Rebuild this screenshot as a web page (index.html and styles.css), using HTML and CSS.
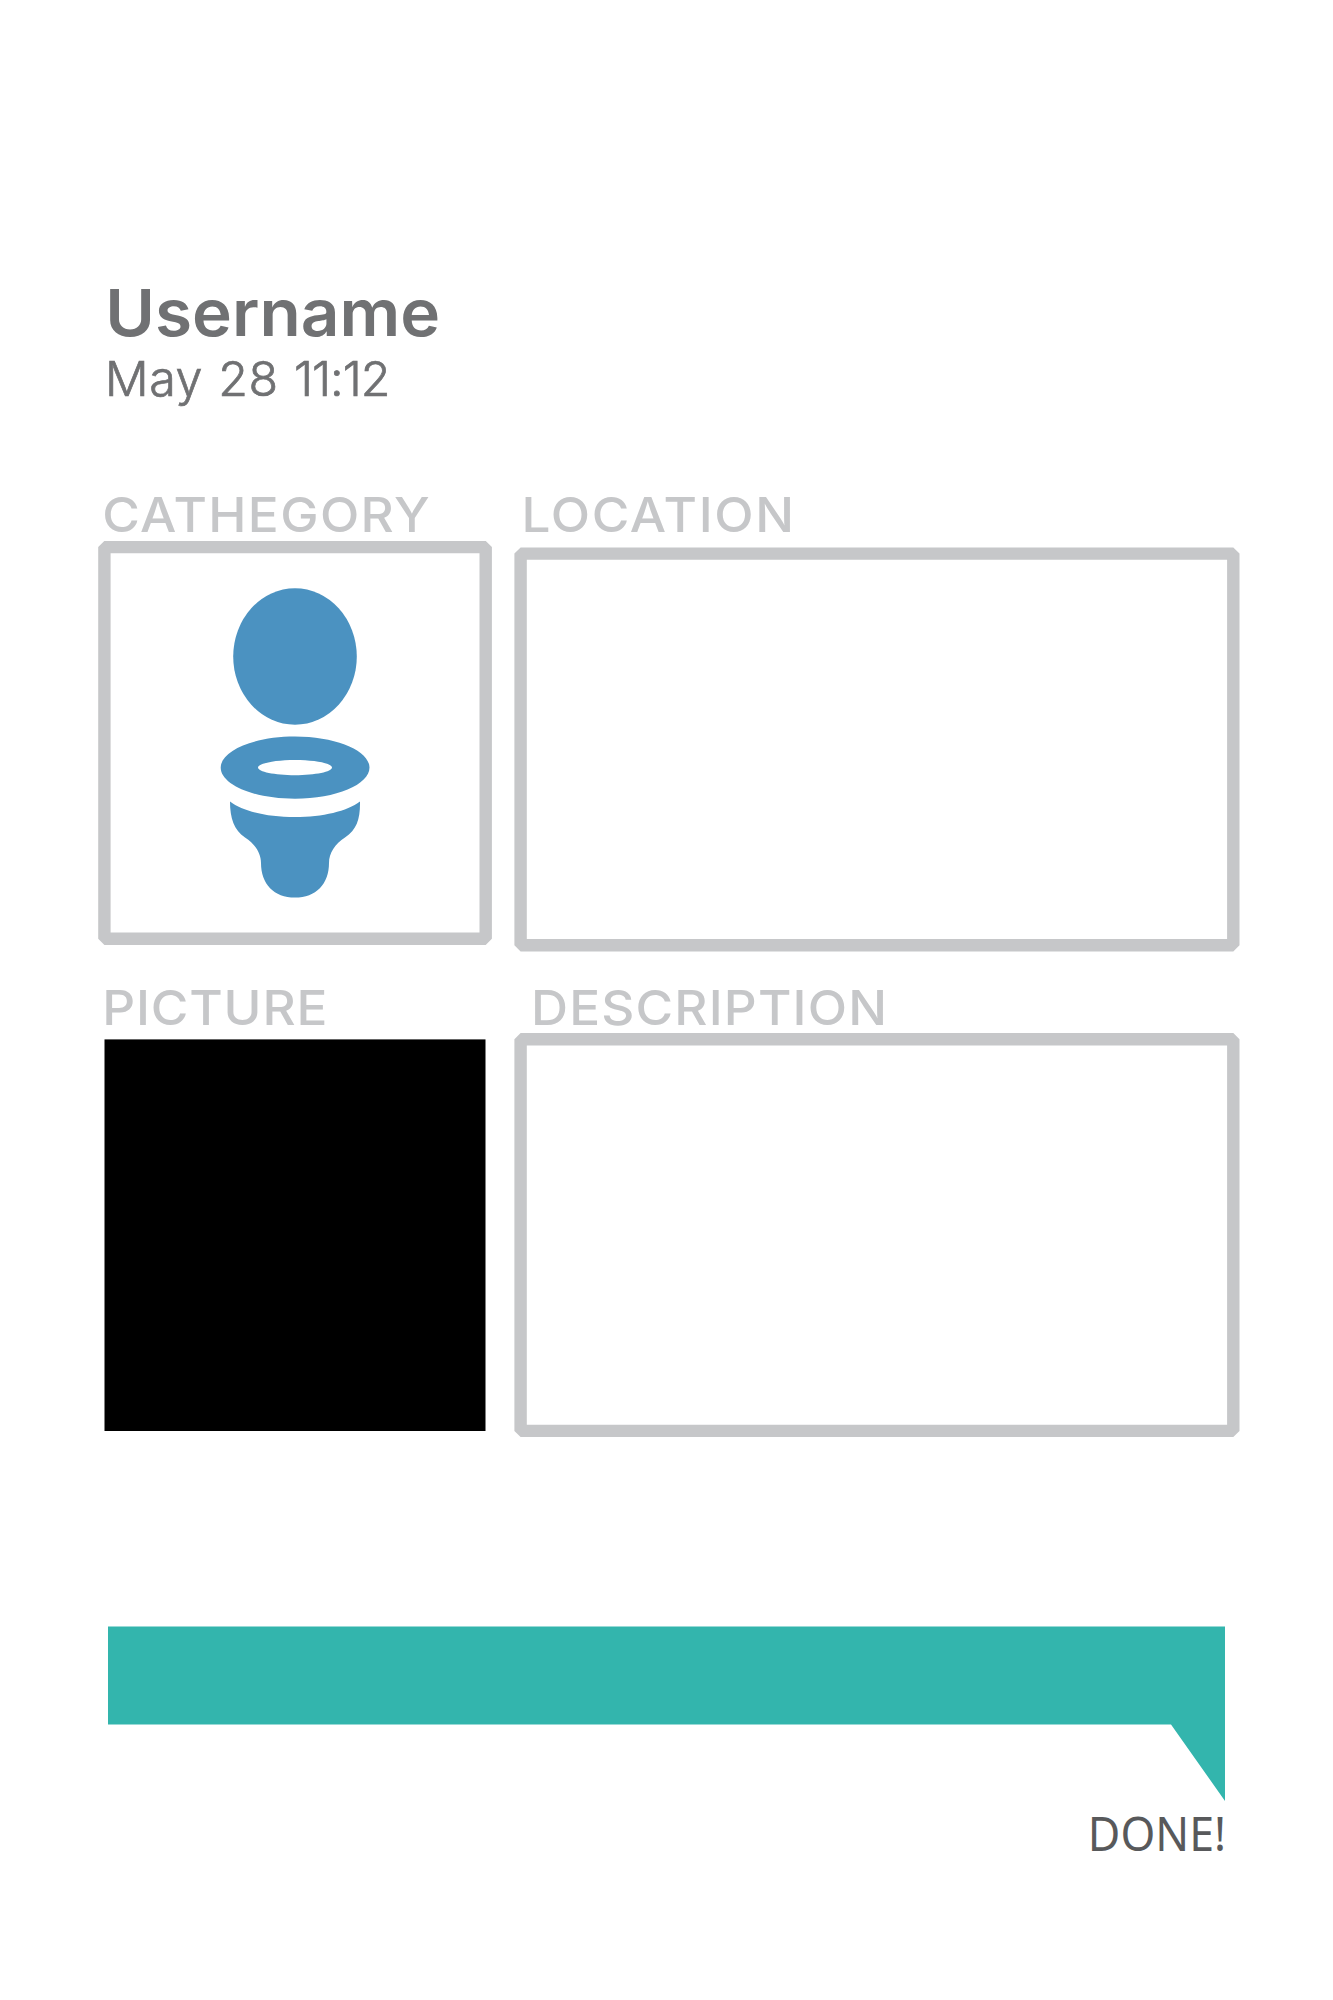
FILE: index.html
```html
<!DOCTYPE html>
<html lang="en">
<head>
<meta charset="utf-8">
<title>Report</title>
<link rel="stylesheet" href="styles.css">
</head>
<body>
<main class="page">
  <header class="author">
    <h1 class="name">Username</h1>
    <p class="date">May 28 <span class="time">11:12</span></p>
  </header>
  <div class="row">
    <section class="left">
      <h2 class="label cathegory">CATHEGORY</h2>
      <svg class="box" width="394" height="405" viewBox="98 541 394 405">
        <rect class="frame" x="104.4" y="547.1" width="381.3" height="391.7"/>
        <g class="icon">
          <ellipse cx="295" cy="656.5" rx="61.8" ry="68.2"/>
          <path fill-rule="evenodd" d="M220.7 767.6C220.7 750.5 254 736.5 295 736.5S369.5 750.5 369.5 767.6 336 798.8 295 798.8 220.7 784.800 220.7 767.600ZM258 767.600C258 771.800 274.500 775.300 295 775.300S332 771.800 332 767.600 315.500 760 295 760 258 763.500 258 767.600Z"/>
          <path d="M230 801.500C243 811.300 267 817 295 817S347 811.300 360 801.500C360.300 819 357 829.500 345 837.500C335 844 329 853 329 863C329 884 316 897.600 295 897.600S261 884 261 863C261 853 255 844 245 837.500C234 830 230 818 230 801.500Z"/>
        </g>
      </svg>
    </section>
    <section class="right">
      <h2 class="label location">LOCATION</h2>
      <svg class="box lowered" width="726" height="405" viewBox="514 547 726 405">
        <rect class="frame" x="520.6" y="553.6" width="712.7" height="391.7"/>
      </svg>
    </section>
  </div>
  <div class="row second">
    <section class="left">
      <h2 class="label picture">PICTURE</h2>
      <svg class="box" width="394" height="405" viewBox="98 1033 394 405">
        <rect x="104.5" y="1039.400" width="381" height="391.600"/>
      </svg>
    </section>
    <section class="right">
      <h2 class="label description">DESCRIPTION</h2>
      <svg class="box" width="726" height="405" viewBox="514 1033 726 405">
        <rect class="frame" x="520.6" y="1039.200" width="712.7" height="391.7"/>
      </svg>
    </section>
  </div>
  <footer class="footer">
    <svg class="bubble" width="1117" height="176" viewBox="108 1626 1117 176">
      <path d="M108 1626.500H1225V1801L1171 1724.400H108Z"/>
    </svg>
    <p class="done">DONE!</p>
  </footer>
</main>
</body>
</html>
```
FILE: styles.css
```css
* { box-sizing: border-box; }
body { margin: 0; background: #fff; }
h1, h2, p { margin: 0; white-space: nowrap; }
.page { width: 1333px; height: 2000px; padding: 275px 93px 0 98px; font-family: Inter, "Liberation Sans", sans-serif; }
.author { height: 213px; color: #707173; }
.name { padding-left: 7px; font-size: 64.6px; line-height: 76px; font-weight: 600; transform: scaleX(1.045); transform-origin: 0 0; }
.date { padding-left: 7px; font-size: 48.4px; line-height: 56px; font-weight: 300; letter-spacing: 0.6px; word-spacing: 1px; -webkit-text-stroke: 0.7px #707173; }
.time { letter-spacing: -1px; }
.row { display: flex; gap: 22px; height: 464px; }
.second { margin-top: 29px; height: 457px; }
.left { width: 394px; }
.right { width: 726px; }
.label { height: 53px; font-size: 48.4px; line-height: 53px; font-weight: 500; color: #c6c7c9; transform: scaleX(1.06); transform-origin: 0 0; }
.second .label { height: 52px; }
.cathegory { padding-left: 4px; letter-spacing: 1.3px; }
.location { padding-left: 7px; letter-spacing: 1.6px; }
.picture { padding-left: 4px; letter-spacing: 0.8px; }
.description { padding-left: 16px; letter-spacing: 1.1px; }
.box { display: block; }
.lowered { margin-top: 6px; }
.frame { fill: none; stroke: #c6c7c9; stroke-width: 12.4px; stroke-linejoin: bevel; }
.icon { fill: #4b92c1; }
.footer { width: 1128px; margin-top: 188px; padding-left: 10px; }
.bubble { display: block; fill: #33b5ad; }
.done { font-family: "Noto Sans", "Open Sans", sans-serif; font-size: 48px; line-height: 62px; color: #58595b; text-align: right; transform: scaleX(0.93); transform-origin: 100% 0; }
```
